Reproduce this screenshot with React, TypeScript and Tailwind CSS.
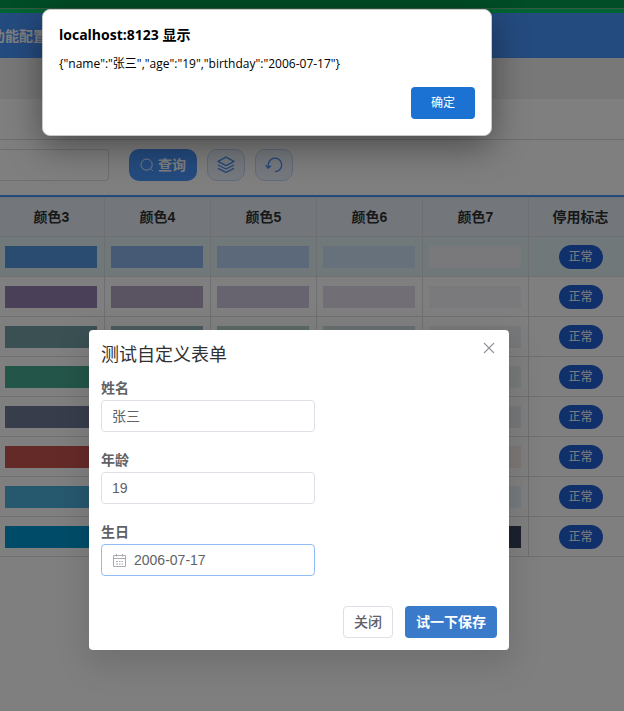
import React from "react";

const cjk = "font-['Liberation_Sans','Noto_Sans_CJK_SC',sans-serif]";

const headers = ["颜色3", "颜色4", "颜色5", "颜色6", "颜色7", "停用标志"];

const rows: string[][] = [
  ["bg-[#5498e0]", "bg-[#8cb4ec]", "bg-[#b6d2f6]", "bg-[#cce2f6]", "bg-[#f2f0f6]"],
  ["bg-[#9480b0]", "bg-[#b2a6c4]", "bg-[#cec6de]", "bg-[#e2dcea]", "bg-[#f4f4f8]"],
  ["bg-[#74a0a4]", "bg-[#98b8bc]", "bg-[#b8d0cc]", "bg-[#d0dee0]", "bg-[#ecf0f3]"],
  ["bg-[#46aa90]", "bg-[#74c0ac]", "bg-[#a2d4c8]", "bg-[#d0eae4]", "bg-[#ecf5f2]"],
  ["bg-[#707a98]", "bg-[#949cb2]", "bg-[#b8bccc]", "bg-[#dcdee6]", "bg-[#eceff2]"],
  ["bg-[#c85450]", "bg-[#d67f7c]", "bg-[#e4aaa8]", "bg-[#f2d4d4]", "bg-[#f8eeea]"],
  ["bg-[#4cb0dc]", "bg-[#7ac4e4]", "bg-[#a6d8ee]", "bg-[#d2ecf6]", "bg-[#e8f4fa]"],
  ["bg-[#0098d0]", "bg-[#0080b0]", "bg-[#006890]", "bg-[#205070]", "bg-[#38425f]"],
];

function PageHeader() {
  return (
    <header>
      <div className="h-2 bg-[#009a4e]" />
      <div className="h-px bg-[#6cb48c]" />
      <div className="h-1 bg-[#00c864]" />
      <nav className="flex h-[45px] items-center overflow-hidden bg-[#4896fe]">
        <a href="#config" className="-ml-[9px] whitespace-nowrap text-sm font-bold text-white">
          功能配置
        </a>
      </nav>
      <div className="h-[41px] bg-[#f0f0f0]" />
      <div className="h-[41px] border-b border-[#dcdcdc]" />
    </header>
  );
}

function Toolbar() {
  const soft =
    "flex h-8 w-[38px] items-center justify-center rounded-[10px] border border-[#c3d8f6] bg-[#edf4fe] text-[#4890f4]";
  return (
    <div className="flex h-[55px] items-center pb-[5px]">
      <input
        aria-label="查询条件"
        className="h-8 w-[109px] shrink-0 rounded-r border border-l-0 border-[#dcdfe6] bg-white"
      />
      <button className="ml-5 flex h-8 w-[68px] items-center justify-center gap-1 rounded-[10px] bg-[#4896fe] text-sm font-bold text-white">
        <svg width="14" height="14" viewBox="0 0 14 14" fill="none" stroke="currentColor">
          <circle cx="6.6" cy="6.6" r="5.6" />
          <path d="M10.6 10.6 12.8 12.8" />
        </svg>
        查询
      </button>
      <button aria-label="图层" className={`${soft} ml-[10px]`}>
        <svg width="18" height="18" viewBox="0 0 18 18" fill="none" stroke="currentColor" strokeWidth="1.3" strokeLinejoin="round">
          <path d="M9 1.2 17 5.4 9 9.6 1 5.4Z" />
          <path d="M1 9 9 13 17 9M1 12.4 9 16.4 17 12.4" />
        </svg>
      </button>
      <button aria-label="重置" className={`${soft} ml-[10px]`}>
        <svg width="18" height="18" viewBox="0 0 18 18" fill="none" stroke="currentColor" strokeWidth="1.3">
          <path d="M3.3 11.5V8.6A6.7 6.7 0 1 1 10 15.6" />
          <path d="M.6 9.2 3.3 12 6 9.8" />
        </svg>
      </button>
    </div>
  );
}

function ColorTable() {
  return (
    <div className="overflow-hidden border-t-2 border-[#4896fe]">
      <table className="-ml-px w-[634px] table-fixed border-separate border-spacing-0 border-t border-[#dcdfe6]">
        <thead>
          <tr>
            {headers.map((h) => (
              <th key={h} className="h-[39px] w-[106px] border-r border-b border-[#dcdfe6] bg-[#e6eff8] p-0 text-sm font-bold text-[#303133] last:w-[104px]">
                {h}
              </th>
            ))}
          </tr>
        </thead>
        <tbody>
          {rows.map((colors, i) => (
            <tr key={i} className={i === 0 ? "bg-[#e0f1f5]" : "bg-white"}>
              {colors.map((c) => (
                <td key={c} className="h-10 border-r border-b border-[#dcdfe6] px-[6px] py-0">
                  <div className={`h-[22px] w-[92px] ${c}`} />
                </td>
              ))}
              <td className="h-10 border-r border-b border-[#dcdfe6] p-0">
                <span className="mx-auto flex h-6 w-11 items-center justify-center rounded-full bg-[#2060d8] text-xs text-white">
                  正常
                </span>
              </td>
            </tr>
          ))}
        </tbody>
      </table>
    </div>
  );
}

function FormDialog() {
  const label = "block pt-px text-sm leading-[23px] font-bold text-[#606266]";
  const input = "h-8 w-full rounded border bg-white text-sm text-[#606266] outline-none";
  return (
    <div role="dialog" aria-label="测试自定义表单" className="relative mx-auto mt-[330px] w-[420px] -translate-x-[13px] rounded bg-white p-3 shadow-[0_12px_32px_4px_rgba(0,0,0,0.12)]">
      <button aria-label="关闭对话框" className="absolute top-3 right-[14px] text-[#909399]">
        <svg width="12" height="12" viewBox="0 0 12 12" fill="none" stroke="currentColor" strokeWidth="1.1">
          <path d="M1 1 11 11M11 1 1 11" />
        </svg>
      </button>
      <h2 className="text-lg leading-[26px] text-[#303133]">测试自定义表单</h2>
      <form className="mt-2 w-[214px]">
        <label htmlFor="name" className={label}>姓名</label>
        <input id="name" defaultValue="张三" className={`${input} border-[#dcdfe6] px-[10px] pb-0.5`} />
        <label htmlFor="age" className={`${label} mt-4`}>年龄</label>
        <input id="age" defaultValue="19" className={`${input} border-[#dcdfe6] px-[10px]`} />
        <label htmlFor="birthday" className={`${label} mt-4`}>生日</label>
        <div className="flex h-8 items-center rounded border border-[#8fbcf5] px-[11px]">
          <svg width="13" height="13" viewBox="0 0 13 13" fill="none" stroke="#a8abb2" className="shrink-0">
            <path d="M.5 1.5H12.5V12.5H.5ZM.5 4.5H12.5M3.5 0V2.5M9.5 0V2.5M3 7.5H5M6 7.5H7.5M8.5 7.5H10M3 10H5M6 10H7.5M8.5 10H10" />
          </svg>
          <input id="birthday" defaultValue="2006-07-17" className="ml-2 w-full min-w-0 bg-transparent text-sm text-[#606266] outline-none" />
        </div>
      </form>
      <footer className="mt-[30px] flex justify-end gap-3">
        <button className="h-8 w-[50px] rounded border border-[#dcdfe6] text-sm font-medium text-[#606266]">关闭</button>
        <button className="h-8 w-[92px] rounded bg-[#3a7aca] text-sm font-bold text-white">试一下保存</button>
      </footer>
    </div>
  );
}

function BrowserAlert() {
  return (
    <div
      role="alertdialog"
      aria-label="localhost:8123 显示"
      className="absolute top-[9px] left-[42px] w-[450px] rounded-lg border border-[#c8cac8] bg-white p-4 pt-[15px] font-['Open_Sans','Noto_Sans_CJK_SC',sans-serif] text-black shadow-[0_10px_36px_rgba(0,0,0,0.42)]"
    >
      <h1 className="text-sm leading-5 font-bold">localhost:8123 显示</h1>
      <p className="mt-2 text-xs leading-[22px]">{'{"name":"张三","age":"19","birthday":"2006-07-17"}'}</p>
      <div className="mt-3 flex justify-end">
        <button className="h-8 w-16 rounded bg-[#1b72d3] text-xs text-white">确定</button>
      </div>
    </div>
  );
}

export default function App() {
  return (
    <div className={`relative min-h-screen overflow-hidden bg-white ${cjk}`}>
      <PageHeader />
      <Toolbar />
      <ColorTable />
      <div className="absolute inset-0 bg-black/50">
        <FormDialog />
      </div>
      <BrowserAlert />
    </div>
  );
}
